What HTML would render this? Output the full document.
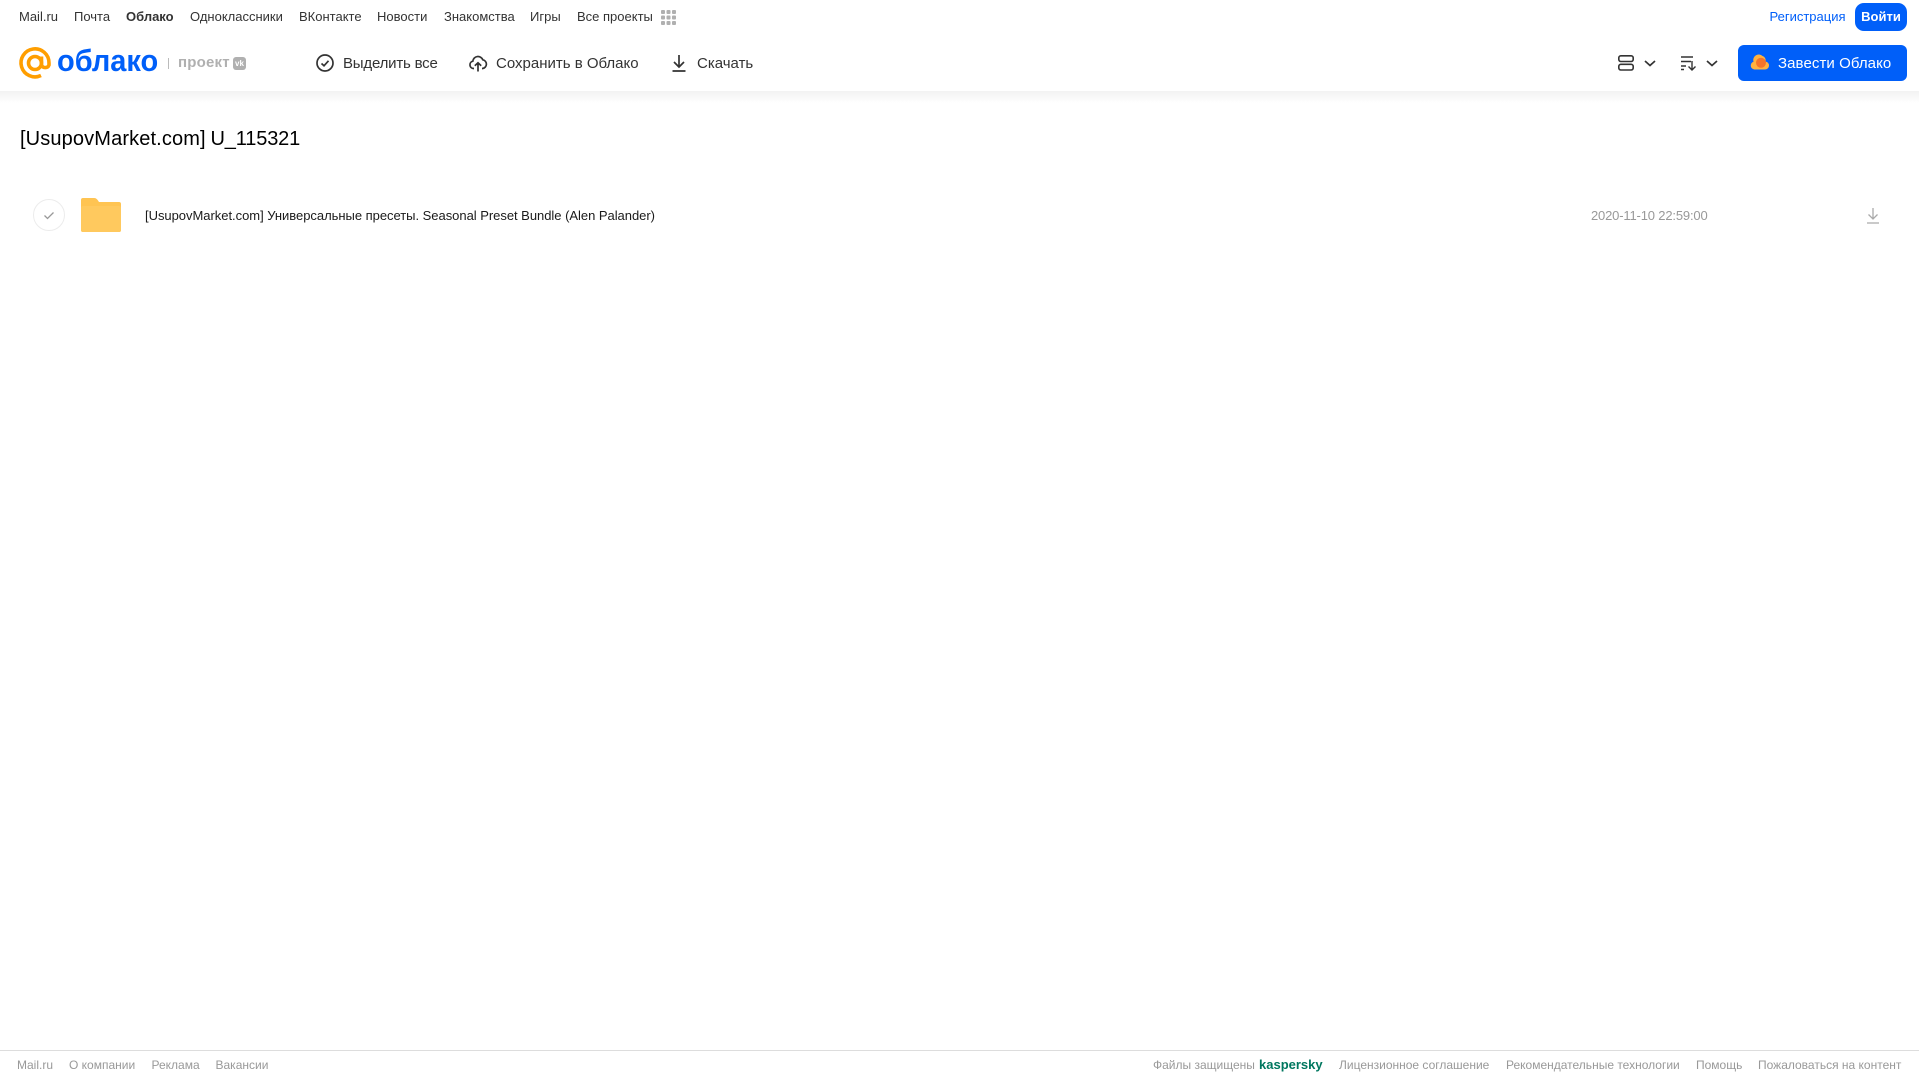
<!DOCTYPE html>
<html lang="ru"><head><meta charset="utf-8"><title>Облако</title>
<style>
html,body{margin:0;padding:0;background:#fff}
body{position:relative;width:1919px;height:1079px;overflow:hidden;font-family:"Liberation Sans",sans-serif}
.t{position:absolute;white-space:nowrap;line-height:20px}
svg{position:absolute;overflow:visible}
.n{top:7px;font-size:13px;color:#333}
.b{top:54px;font-size:15px;color:#333}
.f{top:1055px;font-size:12px;color:#999}
</style></head><body>
<div style="position:absolute;left:0;top:91px;width:1919px;height:12px;background:linear-gradient(#f2f2f2,#fff)"></div>
<div style="position:absolute;left:0;top:0;width:1919px;height:91px;background:#fff"></div>

<span class="t n" style="left:19px">Mail.ru</span>
<span class="t n" style="left:74px">Почта</span>
<span class="t n" style="left:126px;font-weight:bold">Облако</span>
<span class="t n" style="left:190px">Одноклассники</span>
<span class="t n" style="left:299px">ВКонтакте</span>
<span class="t n" style="left:377px">Новости</span>
<span class="t n" style="left:444px">Знакомства</span>
<span class="t n" style="left:530px">Игры</span>
<span class="t n" style="left:577px">Все проекты</span>
<svg style="left:661px;top:10px" width="15" height="15" fill="#b0b0b0"><rect x="0" y="0" width="4" height="4" rx="1"/><rect x="5.500" y="0" width="4" height="4" rx="1"/><rect x="11" y="0" width="4" height="4" rx="1"/><rect x="0" y="5.500" width="4" height="4" rx="1"/><rect x="5.500" y="5.500" width="4" height="4" rx="1"/><rect x="11" y="5.500" width="4" height="4" rx="1"/><rect x="0" y="11" width="4" height="4" rx="1"/><rect x="5.500" y="11" width="4" height="4" rx="1"/><rect x="11" y="11" width="4" height="4" rx="1"/></svg>

<span class="t n" style="left:1769.500px;color:#005ff9">Регистрация</span>
<div class="t" style="left:1855px;top:3px;width:52px;height:28px;line-height:27px;background:#005ff9;border-radius:9px;color:#fff;font-size:13px;font-weight:bold;text-align:center">Войти</div>

<svg style="left:19px;top:47px" width="32" height="33" viewBox="0 0 32 33" fill="none" stroke="#ff9e00" stroke-width="3.600"><circle cx="16" cy="16" r="6.500"/><path d="M22.500 9.500V18a4 4 0 0 0 7.500 0V16A14 14 0 1 0 22 28.500"/></svg>
<span class="t" style="left:57px;top:41px;line-height:40px;font-size:31px;font-weight:bold;color:#005ff9;transform:scaleX(.935);transform-origin:0 50%">облако</span>
<div style="position:absolute;left:168px;top:58px;width:1px;height:11px;background:#bbb"></div>
<span class="t" style="left:178px;top:53px;font-size:15px;font-weight:bold;color:#b0b0b0;letter-spacing:.2px">проект</span>
<div class="t" style="left:233px;top:57px;width:13px;height:13px;background:#b0b0b0;border-radius:3px;color:#fff;font-size:8px;line-height:13px;font-weight:bold;text-align:center">vk</div>

<svg style="left:316px;top:54px" width="18" height="18" viewBox="0 0 18 18" fill="none" stroke="#333" stroke-width="1.700"><circle cx="9" cy="9" r="8"/><path d="M5.500 9.500l2.500 2.300 4.500-5"/></svg>
<span class="t b" style="left:343px;letter-spacing:-.2px">Выделить все</span>
<svg style="left:469px;top:54px" width="18" height="18" viewBox="0 0 18 18" fill="none" stroke="#333" stroke-width="1.700"><path d="M5 14.500H4.500a3.700 3.700 0 0 1-.7-7.300A5.200 5.200 0 0 1 13.800 5.800 4.400 4.400 0 0 1 13.500 14.500H13M9 17.500V9M5.800 11.800 9 8.800l3.200 3"/></svg>
<span class="t b" style="left:496px">Сохранить в Облако</span>
<svg style="left:671px;top:54px" width="16" height="18" viewBox="0 0 16 18" fill="none" stroke="#333" stroke-width="1.700"><path d="M8 1v11.500M3 8l5 5 5-5M1.500 17h13"/></svg>
<span class="t b" style="left:697px">Скачать</span>

<svg style="left:1618px;top:55px" width="16" height="16" viewBox="0 0 16 16" fill="none" stroke="#333" stroke-width="1.600"><rect x=".8" y=".8" width="14.400" height="5.700" rx="2"/><rect x=".8" y="9.300" width="14.400" height="5.700" rx="2"/></svg>
<svg style="left:1644px;top:60px" width="12" height="7" viewBox="0 0 12 7" fill="none" stroke="#333" stroke-width="1.700"><path d="M1 1l5 4.500L11 1"/></svg>
<svg style="left:1681px;top:56px" width="16" height="15" viewBox="0 0 16 15" fill="none" stroke="#333" stroke-width="1.400"><path d="M0 1h12M0 5.500h10M0 10h5M0 13.500h3M11 5v9M7.500 10.500 11 14l3.500-3.500"/></svg>
<svg style="left:1706px;top:60px" width="12" height="7" viewBox="0 0 12 7" fill="none" stroke="#333" stroke-width="1.700"><path d="M1 1l5 4.500L11 1"/></svg>

<div style="position:absolute;left:1738px;top:45px;width:169px;height:36px;background:#005ff9;border-radius:6px"></div>
<svg style="left:1750px;top:54px" width="19" height="16" viewBox="0 0 19 16"><path d="M4.500 15.500a4 4 0 0 1-1-7.800A5.500 5.500 0 0 1 12.500 2a4.500 4.500 0 0 1 3 5.500 4 4 0 0 1-1 8z" fill="#ffb23f"/><circle cx="11" cy="8.800" r="5" fill="#f4742a"/></svg>
<span class="t" style="left:1778px;top:54px;font-size:15px;color:#fff;letter-spacing:.08px">Завести Облако</span>

<span class="t" style="left:20px;top:127.500px;font-size:20px;line-height:22px;color:#000;letter-spacing:.13px">[UsupovMarket.com]</span>
<span class="t" style="left:210.500px;top:127.500px;font-size:20px;line-height:22px;color:#000;letter-spacing:-.15px">U_115321</span>

<div style="position:absolute;left:33px;top:199px;width:30px;height:30px;border:1px solid #ececec;border-radius:50%"></div>
<svg style="left:43px;top:211px" width="12" height="9" viewBox="0 0 12 9" fill="none" stroke="#999" stroke-width="1.300"><path d="M1.500 4.500l3 3L10.500 1.500"/></svg>
<svg style="left:81px;top:198px" width="40" height="34" viewBox="0 0 40 34"><path d="M2 0h11c2 0 3 1 4 2.500L18 4H38a2 2 0 0 1 2 2V32a2 2 0 0 1-2 2H2a2 2 0 0 1-2-2V2a2 2 0 0 1 2-2z" fill="#ffc452"/><rect x="0" y="8" width="40" height="26" rx="2" fill="#ffc95e"/></svg>
<span class="t" style="left:145px;top:206px;font-size:13px;color:#1a1a1a;letter-spacing:-.03px">[UsupovMarket.com] Универсальные пресеты. Seasonal Preset Bundle (Alen Palander)</span>
<span class="t" style="left:1591px;top:206px;font-size:13px;color:#999;letter-spacing:-.17px">2020-11-10 22:59:00</span>
<svg style="left:1866px;top:207px" width="14" height="17" viewBox="0 0 14 17" fill="none" stroke="#aaa" stroke-width="1.300"><path d="M7 1v10.500M2.500 7.500 7 12l4.500-4.500M1 16h12"/></svg>

<div style="position:absolute;left:0;top:1050px;width:1919px;height:1px;background:#ddd"></div>
<span class="t f" style="left:17px">Mail.ru</span>
<span class="t f" style="left:69px">О компании</span>
<span class="t f" style="left:151.500px">Реклама</span>
<span class="t f" style="left:215.500px">Вакансии</span>
<span class="t f" style="left:1153px">Файлы защищены</span>
<span class="t f" style="left:1259px;font-size:13px;font-weight:bold;color:#00775f">kaspersky</span>
<span class="t f" style="left:1339px">Лицензионное соглашение</span>
<span class="t f" style="left:1506px">Рекомендательные технологии</span>
<span class="t f" style="left:1696px">Помощь</span>
<span class="t f" style="left:1758px">Пожаловаться на контент</span>
</body></html>
